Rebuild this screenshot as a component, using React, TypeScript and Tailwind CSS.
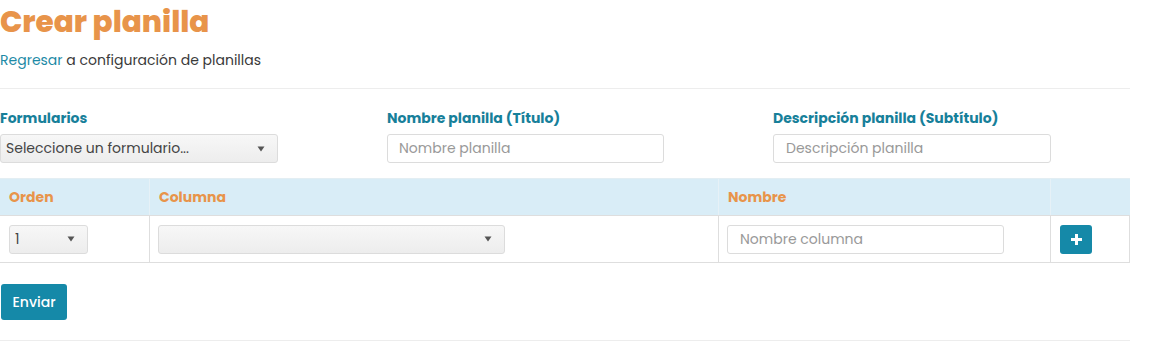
import React from "react";

const Arrow = () => (
  <svg width="8" height="6" viewBox="0 0 8 6" className="shrink-0">
    <path d="M0.5 0.5 L7.5 0.5 L4 5.5 Z" fill="#555" />
  </svg>
);

function FakeSelect({ text, className }: { text: string; className: string }) {
  return (
    <div
      className={`flex items-center justify-between rounded-[3px] border border-[#dcdcdc] bg-gradient-to-b from-[#f7f7f7] to-[#ededed] pl-[5px] pr-[12px] text-[14px] text-[#444] ${className}`}
    >
      <span>{text}</span>
      <Arrow />
    </div>
  );
}

export default function App() {
  return (
    <div className="w-[1164px] h-[342px] overflow-hidden bg-white font-['Poppins','Inter',sans-serif]">
      <div className="w-[1130px]">
        <h1 className="pt-[2px] text-[29.5px] leading-[40px] font-extrabold text-[#e8944a]">
          Crear planilla
        </h1>
        <p className="mt-[8px] text-[14px] leading-[20px] text-[#3a3a3a]">
          <a className="text-[#1d8aa6]">Regresar</a> a configuración de planillas
        </p>
        <div className="mt-[18px] h-px bg-[#ededed]" />

        <div className="mt-[19px] grid grid-cols-[387px_386px_1fr]">
          <div>
            <label className="block text-[14px] leading-[20px] font-bold text-[#17809a]">Formularios</label>
            <FakeSelect text="Seleccione un formulario..." className="mt-[6px] h-[29px] w-[278px]" />
          </div>
          <div>
            <label className="block text-[14px] leading-[20px] font-bold text-[#17809a]">Nombre planilla (Título)</label>
            <div className="mt-[6px] flex h-[29px] w-[277px] items-center rounded-[3px] border border-[#dcdcdc] px-[11px] text-[14px] text-[#999]">
              Nombre planilla
            </div>
          </div>
          <div>
            <label className="block text-[14px] leading-[20px] font-bold text-[#17809a]">Descripción planilla (Subtítulo)</label>
            <div className="mt-[6px] flex h-[29px] w-[278px] items-center rounded-[3px] border border-[#dcdcdc] px-[12px] text-[14px] text-[#999]">
              Descripción planilla
            </div>
          </div>
        </div>

        <div className="mt-[15px] border-t border-[#e3eef3]">
          <div className="grid grid-cols-[150px_569px_332px_1fr] bg-[#d9edf7] h-[36px] items-center text-[14px] font-bold text-[#e8944a]">
            <div className="pl-[9px] border-r border-[#e6f1f7] h-full flex items-center">Orden</div>
            <div className="pl-[9px] border-r border-[#e6f1f7] h-full flex items-center">Columna</div>
            <div className="pl-[9px] border-r border-[#e6f1f7] h-full flex items-center">Nombre</div>
            <div className="h-full" />
          </div>
          <div className="grid grid-cols-[150px_569px_332px_1fr] h-[48px] border-t border-b border-[#dedede]">
            <div className="pl-[9px] border-r border-[#dedede] flex items-center">
              <FakeSelect text="1" className="h-[29px] w-[79px]" />
            </div>
            <div className="pl-[8px] border-r border-[#dedede] flex items-center">
              <FakeSelect text="" className="h-[29px] w-[347px]" />
            </div>
            <div className="pl-[8px] border-r border-[#dedede] flex items-center">
              <div className="flex h-[29px] w-[277px] items-center rounded-[3px] border border-[#dcdcdc] px-[12px] text-[14px] text-[#999]">
                Nombre columna
              </div>
            </div>
            <div className="border-r border-[#dedede] pl-[9px] flex items-center">
              <button className="flex h-[29px] w-[32px] items-center justify-center rounded-[3px] bg-[#1589a8]">
                <svg width="11" height="11" viewBox="0 0 11 11">
                  <path d="M4 0h3v4h4v3H7v4H4V7H0V4h4z" fill="#fff" />
                </svg>
              </button>
            </div>
          </div>
        </div>

        <button className="mt-[21px] ml-px h-[36px] w-[66px] rounded-[3px] bg-[#1589a8] text-[14px] font-medium text-white">
          Enviar
        </button>
        <div className="mt-[20px] h-px bg-[#ededed]" />
      </div>
    </div>
  );
}
